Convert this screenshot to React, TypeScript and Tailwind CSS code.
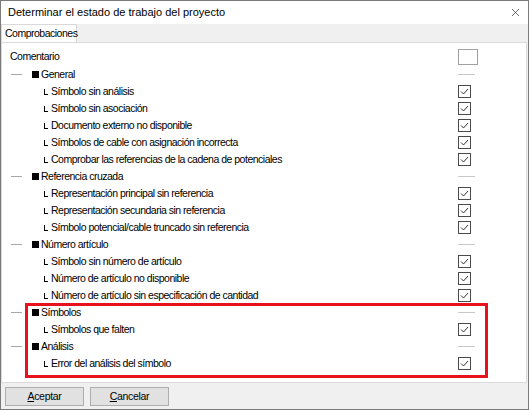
import { X } from 'lucide-react';

type Row = { label: string; group?: boolean };

const rows: Row[] = [
  { label: 'General', group: true },
  { label: 'Símbolo sin análisis' },
  { label: 'Símbolo sin asociación' },
  { label: 'Documento externo no disponible' },
  { label: 'Símbolos de cable con asignación incorrecta' },
  { label: 'Comprobar las referencias de la cadena de potenciales' },
  { label: 'Referencia cruzada', group: true },
  { label: 'Representación principal sin referencia' },
  { label: 'Representación secundaria sin referencia' },
  { label: 'Símbolo potencial/cable truncado sin referencia' },
  { label: 'Número artículo', group: true },
  { label: 'Símbolo sin número de artículo' },
  { label: 'Número de artículo no disponible' },
  { label: 'Número de artículo sin especificación de cantidad' },
  { label: 'Símbolos', group: true },
  { label: 'Símbolos que falten' },
  { label: 'Análisis', group: true },
  { label: 'Error del análisis del símbolo' },
];

function CheckBox() {
  return (
    <div className="w-[13px] h-[13px] border border-[#4a4a4a] bg-white flex items-center justify-center">
      <svg width="11" height="11" viewBox="0 0 11 11">
        <polyline points="2,5.5 4.5,8 9,3" fill="none" stroke="#333" strokeWidth="1" />
      </svg>
    </div>
  );
}

export default function App() {
  return (
    <div
      className="w-[529px] h-[410px] flex flex-col bg-[#f0f0f0] border border-[#7a7a7a] overflow-hidden text-black"
      style={{ fontFamily: '"Liberation Sans", Arial, sans-serif' }}
    >
      {/* Title bar */}
      <div className="h-[23px] bg-white flex items-center pl-[7px] pr-[6px] shrink-0">
        <span className="text-[11px] flex-1">Determinar el estado de trabajo del proyecto</span>
        <X className="w-[13px] h-[13px] text-[#222]" strokeWidth={1.2} />
      </div>

      {/* Tabs */}
      <div className="h-[18px] flex items-end shrink-0">
        <div className="h-[18px] w-[76px] px-[3px] bg-white border border-b-0 border-[#d9d9d9] text-[10.5px] flex items-center tracking-[-0.5px]">
          Comprobaciones
        </div>
      </div>

      {/* Panel */}
      <div className="relative h-[341px] bg-white border border-[#dadada] mr-[1px] shrink-0 pt-[5px] text-[10.5px] tracking-[-0.5px]">
        <div className="h-[18px] flex items-center">
          <span className="pl-[8px] flex-1">Comentario</span>
          <div className="w-[20px] mr-[48px] flex">
            <div className="w-[20px] h-[16px] border border-[#a0a0a0] bg-white" />
          </div>
        </div>

        {rows.map((row, i) => (
          <div key={i} className="h-[17px] flex items-center">
            {row.group ? (
              <div className="flex-1 flex items-center">
                <span className="ml-[9px] w-[11px] h-px bg-[#a8a8a8]" />
                <span className="ml-[10px] w-[7px] h-[7px] bg-black" />
                <span className="ml-[2px]">{row.label}</span>
              </div>
            ) : (
              <div className="flex-1 flex items-center">
                <span className="ml-[42px] w-[4px] h-[6px] border-l border-b border-black mt-[1px]" />
                <span className="ml-[3px]">{row.label}</span>
              </div>
            )}
            <div className="w-[20px] mr-[48px] flex">
              {row.group ? <span className="w-[17px] h-px bg-[#c8c8c8]" /> : <CheckBox />}
            </div>
          </div>
        ))}

        {/* red highlight annotation */}
        <div className="absolute left-[23px] top-[260px] w-[463px] h-[75px] border-[3px] border-[#e8121e]" />
      </div>

      {/* Buttons */}
      <div className="flex-1 flex items-start pt-[4px] pl-[4px] gap-[6px] text-[10.5px] tracking-[-0.3px]">
        <button className="w-[79px] h-[19px] bg-[#e1e1e1] border border-[#adadad] flex items-center justify-center">
          <span><span className="underline">A</span>ceptar</span>
        </button>
        <button className="w-[79px] h-[19px] bg-[#e1e1e1] border border-[#adadad] flex items-center justify-center">
          <span><span className="underline">C</span>ancelar</span>
        </button>
      </div>
    </div>
  );
}
